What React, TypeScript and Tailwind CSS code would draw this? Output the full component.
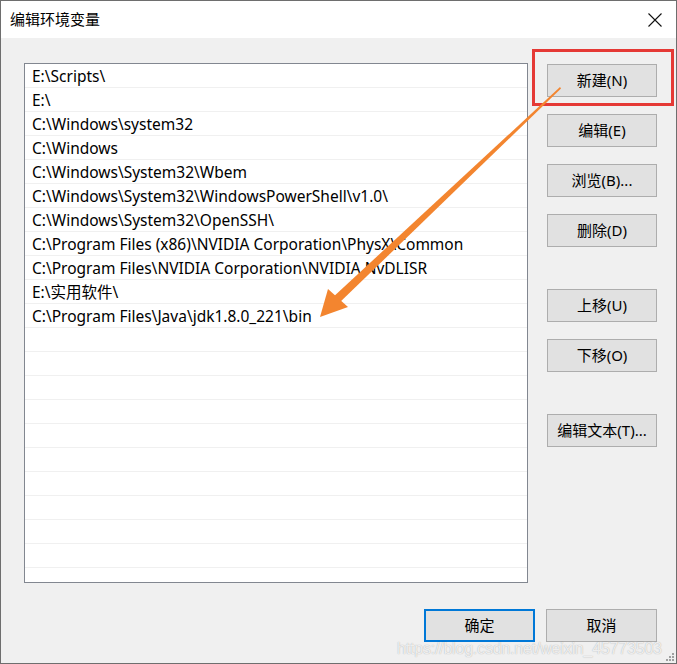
import React from "react";

const rows = [
  "E:\\Scripts\\",
  "E:\\",
  "C:\\Windows\\system32",
  "C:\\Windows",
  "C:\\Windows\\System32\\Wbem",
  "C:\\Windows\\System32\\WindowsPowerShell\\v1.0\\",
  "C:\\Windows\\System32\\OpenSSH\\",
  "C:\\Program Files (x86)\\NVIDIA Corporation\\PhysX\\Common",
  "C:\\Program Files\\NVIDIA Corporation\\NVIDIA NvDLISR",
  "E:\\实用软件\\",
  "C:\\Program Files\\Java\\jdk1.8.0_221\\bin",
];

const allRows = [...rows, ...Array(11).fill("")];

function Btn({ label, className = "" }: { label: string; className?: string }) {
  return (
    <div
      className={
        "w-[110px] h-[33px] bg-[#e1e1e1] border border-[#adadad] flex items-center justify-center text-[15px] text-black " +
        className
      }
    >
      {label}
    </div>
  );
}

export default function App() {
  return (
    <div
      className="relative w-[677px] h-[664px] border border-[#6e6e6e] bg-[#f0f0f0] overflow-hidden flex flex-col"
      style={{ fontFamily: "'Noto Sans', 'Noto Sans CJK SC', sans-serif" }}
    >
      {/* title bar */}
      <div className="h-[37px] bg-white flex items-center justify-between pl-[9px] pr-[14px] shrink-0">
        <span className="text-[15px] text-black leading-none">编辑环境变量</span>
        <svg width="14" height="14" viewBox="0 0 14 14" className="mt-[1px]">
          <path d="M0.5 0.5 L13.5 13.5 M13.5 0.5 L0.5 13.5" stroke="#111" strokeWidth="1.1" fill="none" />
        </svg>
      </div>

      {/* body */}
      <div className="flex pl-[23px] pt-[25px]">
        <div className="w-[504px] h-[520px] bg-white border border-[#828790] overflow-hidden">
          {allRows.map((r, i) => (
            <div
              key={i}
              className="h-[24px] border-b border-[#f0f0f0] pl-[7px] pt-[3px] flex items-center text-[15.5px] text-black whitespace-nowrap leading-none"
            >
              {r}
            </div>
          ))}
        </div>
        <div className="ml-[19px] pt-[1px] flex flex-col">
          <Btn label="新建(N)" />
          <Btn label="编辑(E)" className="mt-[17px]" />
          <Btn label="浏览(B)..." className="mt-[17px]" />
          <Btn label="删除(D)" className="mt-[17px]" />
          <Btn label="上移(U)" className="mt-[42px]" />
          <Btn label="下移(O)" className="mt-[17px]" />
          <Btn label="编辑文本(T)..." className="mt-[42px]" />
        </div>
      </div>

      {/* bottom buttons */}
      <div className="flex justify-end gap-[11px] pr-[19px] mt-[26px]">
        <div className="w-[111px] h-[33px] bg-[#e1e1e1] border-2 border-[#0078d7] flex items-center justify-center text-[15px] text-black">
          确定
        </div>
        <div className="w-[111px] h-[33px] bg-[#e1e1e1] border border-[#adadad] flex items-center justify-center text-[15px] text-black">
          取消
        </div>
      </div>

      {/* watermark */}
      <div
        className="absolute left-[396px] top-[636px] text-[16px] text-white/80 whitespace-nowrap tracking-[-0.2px] [text-shadow:0_0_1px_rgba(0,0,0,0.35)]"
        style={{ fontFamily: "'Liberation Sans', Arial, sans-serif" }}
      >
        https://blog.csdn.net/weixin_45773503
      </div>

      {/* resize grip */}
      <svg className="absolute right-[1px] bottom-[1px]" width="10" height="10" viewBox="0 0 10 10">
        <rect x="7" y="1" width="2" height="2" fill="#a0a0a0" />
        <rect x="4" y="4" width="2" height="2" fill="#a0a0a0" />
        <rect x="7" y="4" width="2" height="2" fill="#a0a0a0" />
        <rect x="1" y="7" width="2" height="2" fill="#a0a0a0" />
        <rect x="4" y="7" width="2" height="2" fill="#a0a0a0" />
        <rect x="7" y="7" width="2" height="2" fill="#a0a0a0" />
      </svg>

      {/* annotations */}
      <svg className="absolute left-[-1px] top-[-1px] pointer-events-none" width="677" height="664" viewBox="0 0 677 664">
        <rect x="533.5" y="50.5" width="139" height="54" fill="none" stroke="#e53935" strokeWidth="3" />
        <polygon points="560,87 561,88.5 337,305 331,299" fill="#f3852f" />
        <polygon points="320,317 328,289 348,307" fill="#f3852f" />
      </svg>
    </div>
  );
}
